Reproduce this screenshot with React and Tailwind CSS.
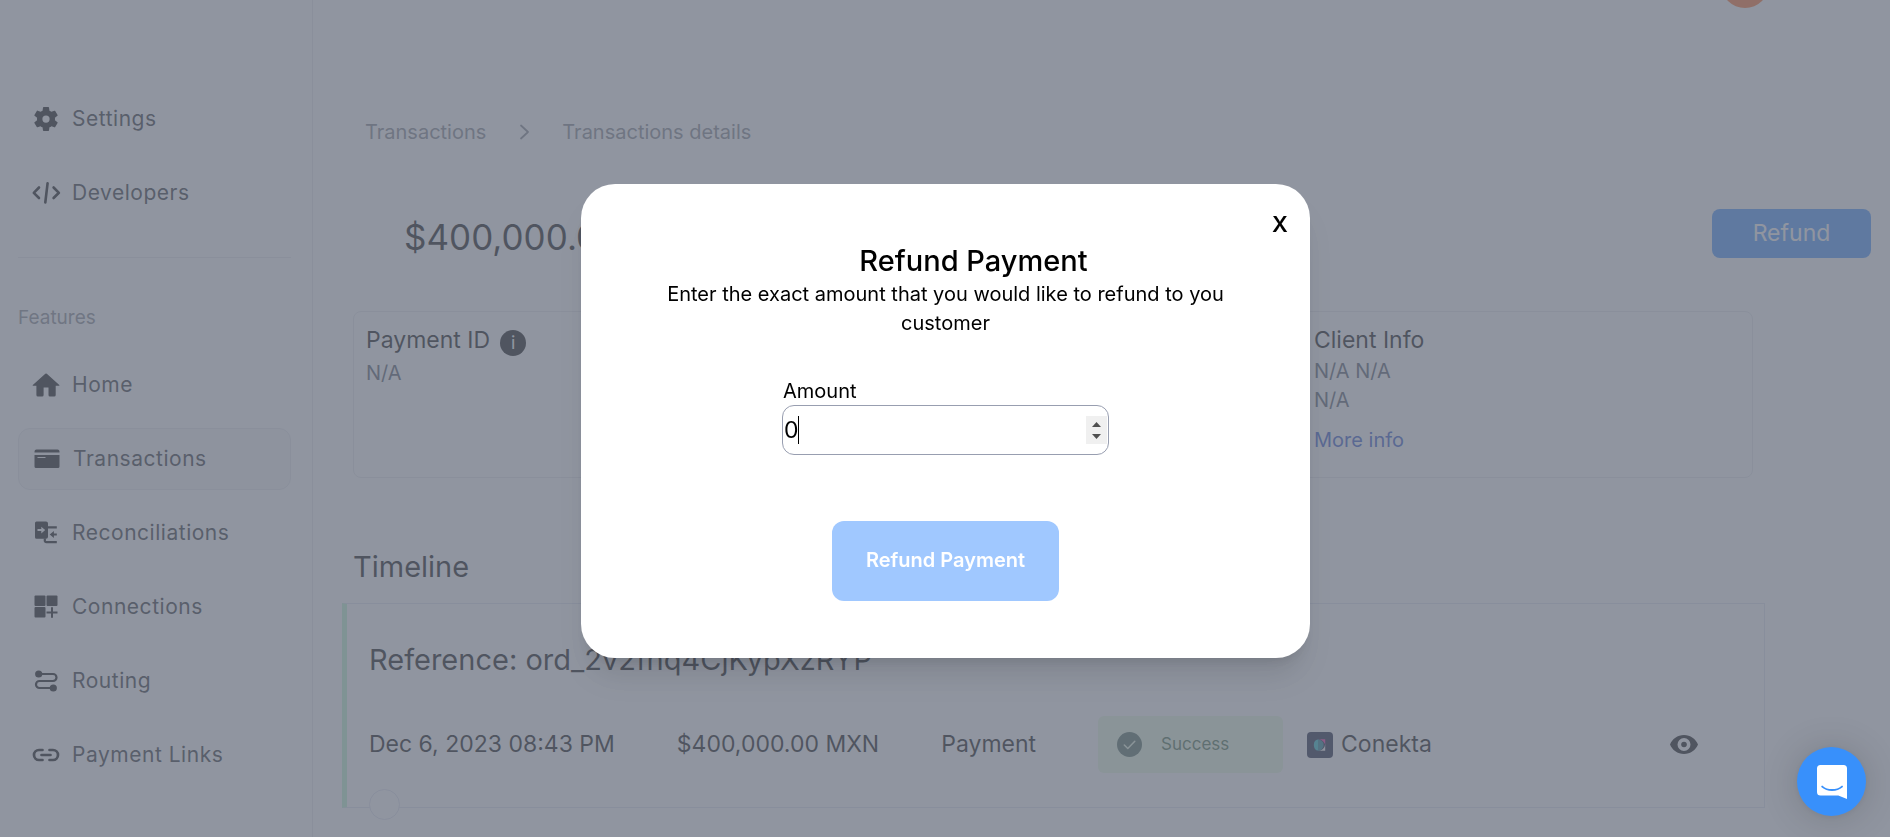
import React, { useState } from "react";

const SettingsIcon = () => (
  <svg viewBox="0 0 24 24" className="h-[30px] w-[30px]" fill="currentColor" aria-hidden="true">
    <path d="M19.14 12.94c.04-.3.06-.61.06-.94 0-.32-.02-.64-.07-.94l2.03-1.58c.18-.14.23-.41.12-.61l-1.92-3.32c-.12-.22-.37-.29-.59-.22l-2.39.96c-.5-.38-1.03-.7-1.62-.94l-.36-2.54c-.04-.24-.24-.41-.48-.41h-3.84c-.24 0-.43.17-.47.41l-.36 2.54c-.59.24-1.13.57-1.62.94l-2.39-.96c-.22-.08-.47 0-.59.22L2.74 8.87c-.12.21-.08.47.12.61l2.03 1.58c-.05.3-.09.63-.09.94s.02.64.07.94l-2.03 1.58c-.18.14-.23.41-.12.61l1.92 3.32c.12.22.37.29.59.22l2.39-.96c.5.38 1.03.7 1.62.94l.36 2.54c.05.24.24.41.48.41h3.84c.24 0 .44-.17.47-.41l.36-2.54c.59-.24 1.13-.56 1.62-.94l2.39.96c.22.08.47 0 .59-.22l1.92-3.32c.12-.22.07-.47-.12-.61l-2.01-1.58zM12 14.900a2.900 2.900 0 1 1 0-5.800 2.900 2.900 0 0 1 0 5.800z" />
  </svg>
);

const CodeIcon = () => (
  <svg viewBox="0 0 30 30" className="h-[30px] w-[30px]" fill="none" stroke="currentColor" strokeWidth="2.6" strokeLinecap="round" strokeLinejoin="round" aria-hidden="true">
    <path d="M8 9.500 2.800 14.800 8 20M22.600 9.500l5.300 5.300-5.300 5.200M16.600 5.200l-2.300 19.300" />
  </svg>
);

const HomeIcon = () => (
  <svg viewBox="0 0 30 30" className="h-[30px] w-[30px]" fill="currentColor" aria-hidden="true">
    <path d="M14.300 3.800a1.100 1.100 0 0 1 1.500 0L28.300 15c.3.3.1.8-.3.8h-3.300v9.100a1.500 1.500 0 0 1-1.500 1.500h-4.200a1.500 1.500 0 0 1-1.500-1.500v-7.300h-4.900v7.300a1.500 1.500 0 0 1-1.500 1.500H6.900a1.500 1.500 0 0 1-1.500-1.500v-9.100H2.100c-.4 0-.6-.5-.3-.8z" />
  </svg>
);

const CardIcon = () => (
  <svg viewBox="0 0 30 30" className="h-[30px] w-[30px]" fill="currentColor" aria-hidden="true">
    <path d="M4.500 5.500h21a2 2 0 0 1 2 2v1h-25v-1a2 2 0 0 1 2-2z" />
    <path fillRule="evenodd" d="M2.500 11h25v11.500a1.500 1.500 0 0 1-1.500 1.500H4a1.500 1.500 0 0 1-1.500-1.500zM5.500 13v.9h8V13z" />
  </svg>
);

const ReconcileIcon = () => (
  <svg viewBox="0 0 30 30" className="h-[30px] w-[30px]" aria-hidden="true">
    <path fillRule="evenodd" fill="currentColor" d="M5.500 3.500H15a2 2 0 0 1 2 2v13.300a2 2 0 0 1-2 2H5.500a1.500 1.500 0 0 1-1.500-1.500V5a1.500 1.500 0 0 1 1.500-1.500zM6.500 11v2h3.800v2.400l3.900-3.400-3.900-3.300V11z" />
    <path fill="none" stroke="currentColor" strokeWidth="2.200" d="M17 9.300h8.800M13.800 20.500v2.200a1.500 1.500 0 0 0 1.500 1.500h10.500M25.800 16.500h-4" />
    <path fill="currentColor" d="m18.700 16.500 4.200-3.600v7.200z" />
  </svg>
);

const ConnectionsIcon = () => (
  <svg viewBox="0 0 30 30" className="h-[30px] w-[30px]" fill="currentColor" aria-hidden="true">
    <rect x="3.500" y="3.500" width="11" height="10.500" rx="1" />
    <rect x="15.500" y="3.500" width="11" height="10.500" rx="1" />
    <rect x="3.500" y="15" width="11" height="10.500" rx="1" />
    <path d="M20 15.300h2v4.200h4.500v2H22v4.200h-2v-4.200h-4.500v-2H20z" />
  </svg>
);

const RoutingIcon = () => (
  <svg viewBox="0 0 30 30" className="h-[30px] w-[30px]" aria-hidden="true">
    <path fill="none" stroke="currentColor" strokeWidth="2.200" d="M7 8h15a3.400 3.400 0 0 1 0 7H8.500a3.500 3.500 0 0 0 0 7H22" />
    <circle cx="7.700" cy="8" r="3.600" fill="currentColor" />
    <circle cx="22.300" cy="22" r="3.600" fill="currentColor" />
  </svg>
);

const LinkIcon = () => (
  <svg viewBox="0 0 30 30" className="h-[30px] w-[30px]" fill="none" stroke="currentColor" strokeWidth="2.700" strokeLinecap="round" aria-hidden="true">
    <path d="M11.500 10H8a5 5 0 0 0 0 10h3.500M18.500 10H22a5 5 0 0 1 0 10h-3.500M10.500 15h9" />
  </svg>
);

const EyeIcon = () => (
  <svg viewBox="0 0 28 19" className="h-[19px] w-[28px]" aria-hidden="true">
    <path fillRule="evenodd" fill="currentColor" d="M14 0C7.600 0 2.200 4 0 9.500 2.200 15 7.600 19 14 19s11.800-4 14-9.500C25.800 4 20.400 0 14 0zm0 16a6.500 6.500 0 1 1 0-13 6.500 6.500 0 0 1 0 13z" />
    <circle cx="14" cy="9.500" r="2.800" fill="currentColor" />
  </svg>
);

const ConektaLogo = () => (
  <svg viewBox="0 0 26 26" className="h-[26px] w-[26px]" aria-hidden="true">
    <rect width="26" height="26" rx="4" fill="#0b1033" />
    <path d="M11 7.200h7.200v7A7 7 0 0 0 11 7.200z" fill="#f0209a" />
    <path d="M11 18.800h7.200v-6.500a7 7 0 0 1-7.200 6.500z" fill="#f5f5f5" />
    <ellipse cx="10.800" cy="13" rx="4" ry="5.600" fill="#18b8c4" />
    <path d="M11 7.400a5.600 5.600 0 0 1 0 11.200z" fill="#127a8c" />
  </svg>
);

const topItems = [
  { label: "Settings", Icon: SettingsIcon },
  { label: "Developers", Icon: CodeIcon },
];

const featureItems = [
  { label: "Home", Icon: HomeIcon },
  { label: "Transactions", Icon: CardIcon, active: true },
  { label: "Reconciliations", Icon: ReconcileIcon },
  { label: "Connections", Icon: ConnectionsIcon },
  { label: "Routing", Icon: RoutingIcon },
  { label: "Payment Links", Icon: LinkIcon },
];

function NavItem({ label, Icon, active }) {
  return (
    <a
      href="#"
      aria-current={active ? "page" : undefined}
      className={
        "flex h-[62px] items-center gap-[11px] px-[13px] text-[21px] tracking-wide text-[#26282e] " +
        (active ? "rounded-xl border border-[#e5e7eb] bg-[#f7f7f8]" : "")
      }
    >
      <span className="text-black">
        <Icon />
      </span>
      {label}
    </a>
  );
}

function Sidebar() {
  return (
    <aside className="w-[313px] shrink-0 border-r border-[#e5e7eb] pt-[88px] pr-[21px] pl-[18px]">
      <nav className="flex flex-col gap-3">
        {topItems.map((item) => (
          <NavItem key={item.label} {...item} />
        ))}
      </nav>
      <hr className="mt-[33px] border-[#e5e7eb]" />
      <h2 className="mt-[45px] text-[19px] leading-[30px] text-[#80848c]">Features</h2>
      <nav className="mt-[21px] flex flex-col gap-3">
        {featureItems.map((item) => (
          <NavItem key={item.label} {...item} />
        ))}
      </nav>
    </aside>
  );
}

function Details() {
  return (
    <main className="min-w-0 grow">
      <header className="flex justify-end pr-[121px]">
        <button aria-label="Account" className="-mt-10 h-12 w-12 rounded-full bg-[#ff6a20]" />
      </header>

      <nav aria-label="Breadcrumb" className="mt-[109px] flex items-center pl-[52px] text-[20px] leading-[30px] text-[#7c8088]">
        <a href="#">Transactions</a>
        <svg viewBox="0 0 12 16" className="mx-8 h-4 w-3" fill="none" stroke="currentColor" strokeWidth="1.800" strokeLinecap="round" strokeLinejoin="round" aria-hidden="true">
          <path d="m3 1.500 7 6.500-7 6.500" />
        </svg>
        <span>Transactions details</span>
      </nav>

      <div className="mt-[62px] flex h-[49px] items-center justify-between pr-[19px] pl-[91px]">
        <h1 className="pt-2 text-[35px] leading-[45px] text-black">$400,000.00 MXN</h1>
        <button className="h-[49px] w-[159px] rounded-lg bg-[#3c90ff] text-[23px] text-white">Refund</button>
      </div>

      <section className="mt-[53px] mr-[137px] ml-[40px] grid h-[167px] grid-cols-3 gap-12 rounded-lg border border-[#e5e7eb] px-3 pt-[14px]">
        <div>
          <div className="flex h-[29px] items-center gap-[10px]">
            <h2 className="text-[23px] leading-[29px] text-black">Payment ID</h2>
            <span className="mt-1 flex h-[26px] w-[26px] items-center justify-center rounded-full bg-black text-[18px] leading-none text-white">i</span>
          </div>
          <p className="mt-1 text-[20px] leading-[29px] text-[#4b5563]">N/A</p>
        </div>
        <div className="col-start-3">
          <h2 className="text-[23px] leading-[29px] text-black">Client Info</h2>
          <p className="mt-[2px] text-[20px] leading-[29px] text-[#4b5563]">N/A N/A</p>
          <p className="text-[20px] leading-[29px] text-[#4b5563]">N/A</p>
          <a href="#" className="mt-[11px] block text-[20px] leading-[29px] text-[#2a50c8]">More info</a>
        </div>
      </section>

      <h2 className="mt-[71px] pl-[40px] text-[29px] leading-[36px] text-black">Timeline</h2>

      <section className="relative mt-[18px] mr-[125px] ml-[29px] h-[205px] border border-l-[5px] border-[#dfe1ee] border-l-[#bbf7d0] pl-[22px] pt-[38px]">
        <h3 className="text-[29px] leading-[36px] text-black">Reference: ord_2v2fhq4CjKypXzRYP</h3>
        <div className="mt-[38px] flex items-center gap-[62px] pr-[66px] text-[23px] text-black">
          <span>Dec 6, 2023 08:43 PM</span>
          <span>$400,000.00 MXN</span>
          <span>Payment</span>
          <div className="flex items-center gap-6">
            <span className="flex h-[57px] w-[185px] items-center gap-[19px] rounded-md bg-[#e6fadf] pl-[19px] text-[17px] text-[#3f6a45]">
              <svg viewBox="0 0 25 25" className="h-[25px] w-[25px]" aria-hidden="true">
                <circle cx="12.500" cy="12.500" r="12.500" fill="#446455" />
                <path d="m7.300 13 3.500 3.500 7-7.200" fill="none" stroke="#e6fadf" strokeWidth="1.500" strokeLinecap="round" strokeLinejoin="round" />
              </svg>
              Success
            </span>
            <span className="flex items-center gap-2">
              <ConektaLogo />
              Conekta
            </span>
          </div>
          <button aria-label="View details" className="ml-auto">
            <EyeIcon />
          </button>
        </div>
        <span className="absolute -bottom-[13px] left-[22px] h-[31px] w-[31px] rounded-full border border-[#dfe1ee] bg-white" />
      </section>
    </main>
  );
}

function AmountField() {
  const [amount, setAmount] = useState("0");
  const step = (delta) => setAmount(String(Number(amount) + delta));
  return (
    <div className="w-[327px]">
      <label htmlFor="amount" className="block pl-[1px] text-[20px] leading-[28px]">Amount</label>
      <div className="relative">
        <input
          id="amount"
          type="number"
          value={amount}
          onChange={(e) => setAmount(e.target.value)}
          className="h-[50px] w-full rounded-xl border border-[#989eb0] pr-6 pl-[1px] text-[23px] leading-[28px] caret-transparent outline-none [appearance:textfield] [&::-webkit-inner-spin-button]:appearance-none"
        />
        <span className="absolute top-[11px] left-4 h-7 w-px bg-black" />
        <div className="absolute top-[11px] right-[2px] flex h-7 w-[21px] flex-col bg-[#f0f0f0] text-[#505050]">
          <button type="button" aria-label="Increase amount" onClick={() => step(1)} className="flex grow items-end justify-center pb-[3px]">
            <svg viewBox="0 0 9 5" className="h-[5px] w-[9px]" fill="currentColor" aria-hidden="true">
              <path d="M4.500 0 9 5H0z" />
            </svg>
          </button>
          <button type="button" aria-label="Decrease amount" onClick={() => step(-1)} className="flex grow items-start justify-center pt-1">
            <svg viewBox="0 0 9 5" className="h-[5px] w-[9px]" fill="currentColor" aria-hidden="true">
              <path d="M0 0h9L4.500 5z" />
            </svg>
          </button>
        </div>
      </div>
    </div>
  );
}

function RefundModal() {
  return (
    <div className="fixed inset-0 z-10 flex items-center justify-center bg-[#6b7280]/75 pt-[5px] pl-px">
      <div
        role="dialog"
        aria-modal="true"
        aria-labelledby="refund-title"
        className="w-[729px] rounded-[34px] bg-white px-16 pt-[25px] pb-[57px] text-black shadow-[0_24px_30px_-6px_rgb(0_0_0/0.1),0_10px_12px_-7px_rgb(0_0_0/0.1)]"
      >
        <div className="-mr-[49px] flex justify-end">
          <button aria-label="Close" className="h-[30px] w-[30px] text-[22px] leading-[30px] font-semibold">X</button>
        </div>
        <h2 id="refund-title" className="mt-1 pl-14 text-center text-[29px] leading-[36px] font-medium">Refund Payment</h2>
        <p className="mt-[1px] text-center text-[20px] leading-[29px]">
          Enter the exact amount that you would like to refund to you customer
        </p>
        <form className="mt-[39px] flex flex-col items-center" onSubmit={(e) => e.preventDefault()}>
          <AmountField />
          <button type="submit" className="mt-[66px] h-20 w-[227px] rounded-xl bg-[#a0c8ff] pb-[2px] text-[20px] font-semibold text-white">
            Refund Payment
          </button>
        </form>
      </div>
    </div>
  );
}

function ChatLauncher() {
  return (
    <button
      aria-label="Open chat"
      className="fixed right-6 bottom-[21px] z-20 flex h-[69px] w-[69px] items-center justify-center rounded-full bg-[#3890fb] shadow-[0_1px_7px_rgb(0_0_0/0.06),0_2px_38px_rgb(0_0_0/0.16)]"
    >
      <svg viewBox="0 0 30 34" className="h-[34px] w-[30px]" aria-hidden="true">
        <path fill="#fff" d="M3.500 0h23A3.500 3.500 0 0 1 30 3.500V34l-8.700-3.500H3.500A3.500 3.500 0 0 1 0 27V3.500A3.500 3.500 0 0 1 3.500 0z" />
        <path d="M5.200 21.600c2.700 2.300 6 3.400 9.800 3.400s7.300-1.100 10-3.400" fill="none" stroke="#3890fb" strokeWidth="1.900" strokeLinecap="round" />
      </svg>
    </button>
  );
}

export default function App() {
  return (
    <div className="flex h-screen overflow-hidden bg-white font-['Inter',sans-serif]">
      <Sidebar />
      <Details />
      <RefundModal />
      <ChatLauncher />
    </div>
  );
}
